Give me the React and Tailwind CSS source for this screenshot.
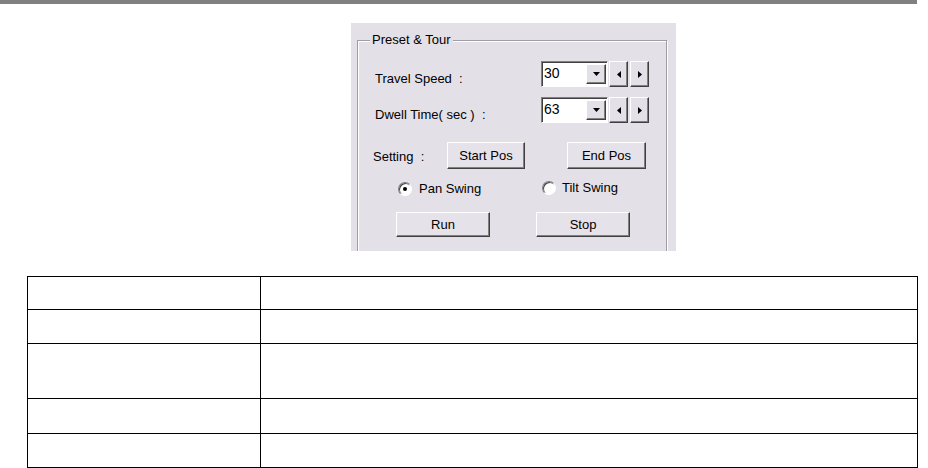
import React from 'react';

const raised =
  'border border-t-white border-l-white border-r-[#404040] border-b-[#404040] shadow-[inset_-1px_-1px_0_#808080]';

const Tri = ({ dir }) => {
  const pts = {
    down: '0,0 7,0 3.5,4',
    left: '4,0 4,7 0,3.5',
    right: '0,0 0,7 4,3.5',
  }[dir];
  const w = dir === 'down' ? 7 : 4;
  const h = dir === 'down' ? 4 : 7;
  return (
    <svg width={w} height={h} viewBox={`0 0 ${w} ${h}`}>
      <polygon points={pts} fill="#000" />
    </svg>
  );
};

const Combo = ({ value }) => (
  <div className="flex items-center h-[26px]">
    <div className="flex w-[67px] h-full bg-white border border-t-[#808080] border-l-[#808080] border-r-white border-b-white shadow-[inset_1px_1px_0_#404040]">
      <span className="flex-1 pl-[2px] pt-[3px] text-[14px] leading-[17px]">{value}</span>
      <div className={`w-[20px] h-[20px] mt-[2px] mr-[1px] flex items-center justify-center bg-[#e4e0e8] ${raised}`}>
        <Tri dir="down" />
      </div>
    </div>
    <div className={`ml-[1px] w-[19px] h-full flex items-center justify-center bg-[#e4e0e8] ${raised}`}>
      <Tri dir="left" />
    </div>
    <div className={`ml-[2px] w-[19px] h-full flex items-center justify-center bg-[#e4e0e8] ${raised}`}>
      <Tri dir="right" />
    </div>
  </div>
);

const Btn = ({ children, w }) => (
  <div className={`${w} h-full flex items-center justify-center bg-[#e6e2ea] ${raised}`}>
    {children}
  </div>
);

const Radio = ({ checked }) => (
  <div className="w-[14px] h-[14px] rounded-full bg-white border border-t-[#808080] border-l-[#808080] border-r-[#ffffff] border-b-[#ffffff] shadow-[inset_1px_1px_0_#404040] flex items-center justify-center">
    {checked && <div className="w-[4px] h-[4px] rounded-full bg-black" />}
  </div>
);

const rows = [
  'h-[33px]',
  'h-[34px]',
  'h-[55px]',
  'h-[35px]',
  'h-[34px]',
];

export default function App() {
  return (
    <div
      className="w-[928px] h-[468px] bg-white overflow-hidden text-black"
      style={{ fontFamily: '"Liberation Sans", Arial, sans-serif' }}
    >
      <div className="h-[4px] w-[917px] bg-[#808080]" />

      <div className="ml-[351px] mt-[19px] w-[325px] h-[228px] bg-[#e4e0e8] overflow-hidden pt-[17px] pl-[6px] text-[13px] leading-[16px]">
        <div className="relative w-[310px] h-[260px] border border-b-0 border-[#a09ca6] shadow-[inset_1px_1px_0_#fff,1px_1px_0_#fff]">
          <span className="absolute -top-[9px] left-[12px] px-[2px] bg-[#e4e0e8]">Preset &amp; Tour</span>

          <div className="flex items-center mt-[20px] ml-[17px]">
            <span className="w-[166px] pt-[10px]">Travel Speed&nbsp; :</span>
            <Combo value="30" />
          </div>

          <div className="flex items-center mt-[10px] ml-[17px]">
            <span className="w-[166px] pt-[10px]">Dwell Time( sec )&nbsp; :</span>
            <Combo value="63" />
          </div>

          <div className="flex items-center h-[27px] mt-[19px] ml-[15px]">
            <span className="w-[74px] pt-[2px]">Setting&nbsp; :</span>
            <Btn w="w-[78px]">Start Pos</Btn>
            <div className="w-[42px]" />
            <Btn w="w-[79px]">End Pos</Btn>
          </div>

          <div className="flex items-center h-[14px] mt-[13px] ml-[40px]">
            <Radio checked />
            <span className="ml-[7px] w-[123px]">Pan Swing</span>
            <div className="-mt-[2px] flex items-center">
              <Radio />
              <span className="ml-[6px]">Tilt Swing</span>
            </div>
          </div>

          <div className="flex items-center h-[25px] mt-[16px] ml-[38px]">
            <Btn w="w-[94px]">Run</Btn>
            <div className="w-[46px]" />
            <Btn w="w-[94px]">Stop</Btn>
          </div>
        </div>
      </div>

      <table className="ml-[27px] mt-[25px] w-[891px] border-collapse">
        <tbody>
          {rows.map((h, i) => (
            <tr key={i} className={h}>
              <td className="w-[233px] border border-black p-0" />
              <td className="border border-black p-0" />
            </tr>
          ))}
        </tbody>
      </table>
    </div>
  );
}
